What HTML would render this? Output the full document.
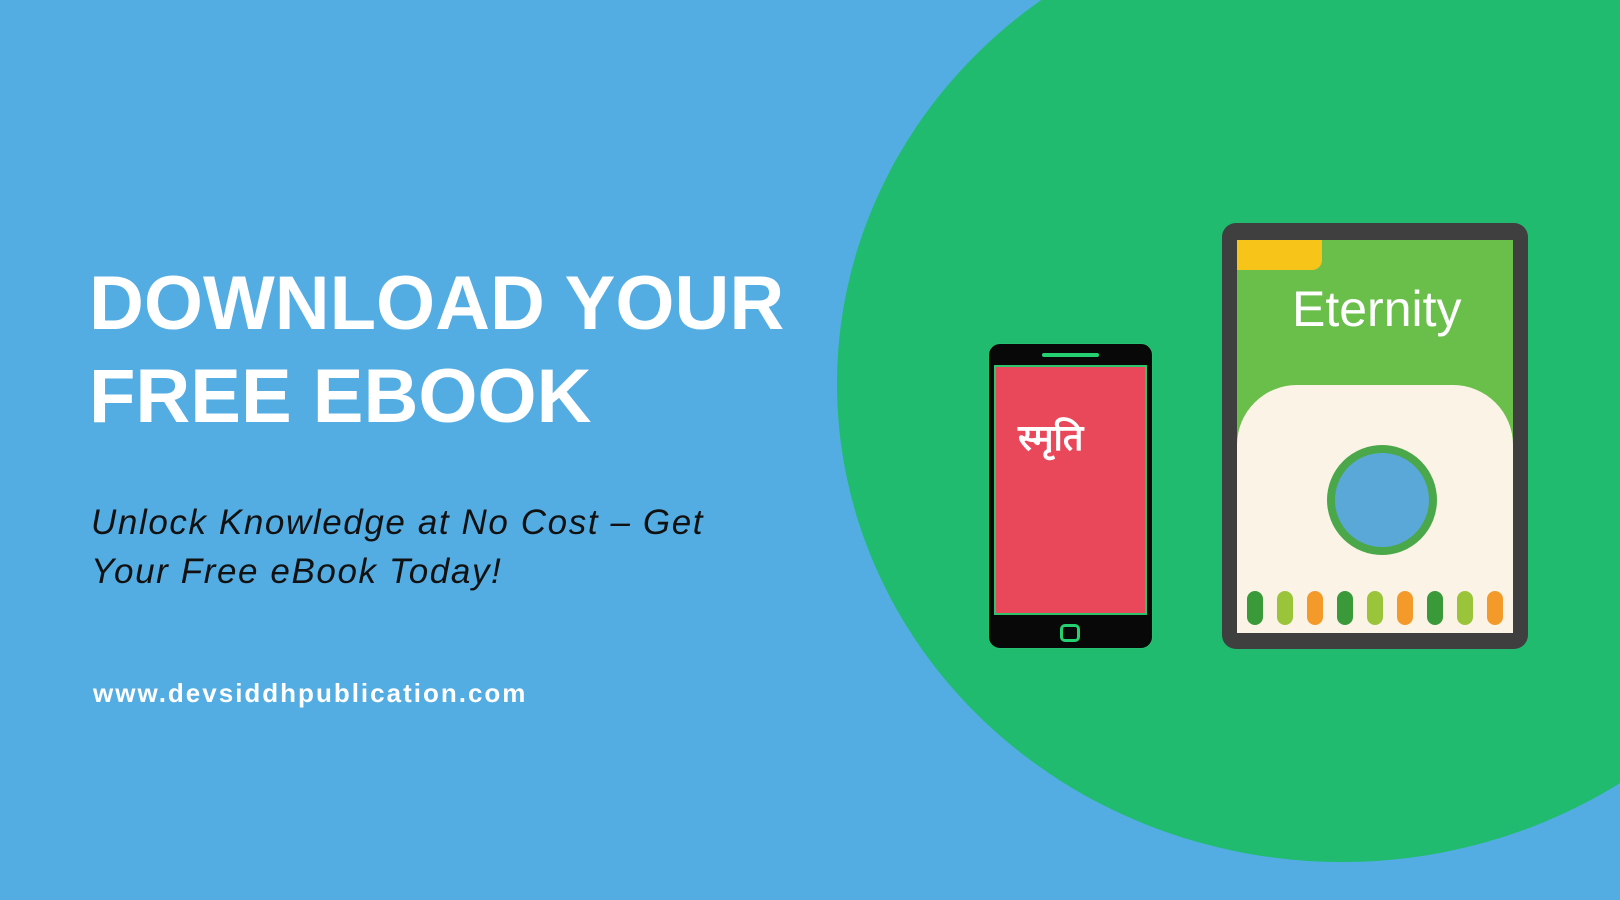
<!DOCTYPE html>
<html><head><meta charset="utf-8"><style>
*{margin:0;padding:0;box-sizing:border-box}
body{width:1620px;height:900px;overflow:hidden;background:#53ade3;position:relative;font-family:"Liberation Sans",sans-serif}
.circle{position:absolute;left:837px;top:-94px;width:1010px;height:956px;border-radius:50%;background:#20bb6f}
h1{position:absolute;left:89px;top:257px;color:#fff;font-weight:bold;font-size:76px;line-height:93px;letter-spacing:0px;width:800px}
.sub{position:absolute;left:91px;top:498px;font-style:italic;font-size:35px;line-height:49px;color:#111;width:760px;letter-spacing:1.6px}
.url{position:absolute;left:93px;top:678px;color:#fff;font-weight:bold;font-size:26px;letter-spacing:2px}
.phone{position:absolute;left:988px;top:343px;width:165px;height:306px;background:#080808;border-radius:12px;border:1px solid #25c070}
.phone .spk{position:absolute;left:53px;top:9px;width:57px;height:4px;background:#25d070;border-radius:2px}
.phone .scr{position:absolute;left:5px;top:21px;width:153px;height:250px;background:#e8485a;border:2px solid #2ec46e;overflow:hidden}
.phone .btn{position:absolute;left:71px;top:280px;width:20px;height:18px;border:3px solid #25d070;border-radius:5px}
.hin{position:absolute;left:22px;top:45px;color:#fff;font-family:"Liberation Sans","Noto Sans CJK SC",sans-serif;font-size:36px;font-weight:bold}
.tab{position:absolute;left:1222px;top:223px;width:306px;height:426px;background:#3f3f3f;border-radius:14px}
.tab .scr{position:absolute;left:15px;top:17px;width:276px;height:393px;background:#6abf4b;overflow:hidden}
.ttl{position:absolute;left:55px;top:40px;color:#fff;font-size:50px;font-family:"Liberation Sans",sans-serif}
.cloud{position:absolute;left:0;top:145px;width:276px;height:260px;background:#fbf3e6;border-radius:60px 60px 0 0}
.globe{position:absolute;left:90px;top:205px;width:110px;height:110px;border-radius:50%;background:#5aa8d8;border:8px solid #4aa84a}
.tree{position:absolute;bottom:8px;width:16px;height:34px;border-radius:8px}
</style></head><body>
<div class="circle"></div>
<h1>DOWNLOAD YOUR<br>FREE EBOOK</h1>
<div class="sub">Unlock Knowledge at No Cost – Get<br>Your Free eBook Today!</div>
<div class="url">www.devsiddhpublication.com</div>
<div class="phone"><div class="spk"></div><div class="scr"><div class="hin">स्मृति</div></div><div class="btn"></div></div>
<div class="tab"><div class="scr">
<div style="position:absolute;left:0;top:0;width:85px;height:30px;background:#f7c51a;border-radius:0 0 10px 0"></div>
<div class="ttl">Eternity</div>
<div class="cloud"></div>
<div class="globe"></div>
<div class="tree" style="left:10px;background:#3a9a3a"></div>
<div class="tree" style="left:40px;background:#9ac43a"></div>
<div class="tree" style="left:70px;background:#f39a2a"></div>
<div class="tree" style="left:100px;background:#3a9a3a"></div>
<div class="tree" style="left:130px;background:#9ac43a"></div>
<div class="tree" style="left:160px;background:#f39a2a"></div>
<div class="tree" style="left:190px;background:#3a9a3a"></div>
<div class="tree" style="left:220px;background:#9ac43a"></div>
<div class="tree" style="left:250px;background:#f39a2a"></div>
</div></div>
</body></html>
